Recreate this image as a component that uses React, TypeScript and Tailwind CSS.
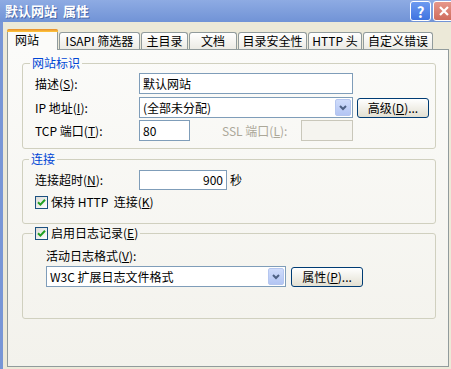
import React from "react";

const tabs = [
  { label: "网站", w: "w-[51px]", active: true },
  { label: "ISAPI 筛选器", w: "w-[81px]" },
  { label: "主目录", w: "w-[47px]" },
  { label: "文档", w: "w-[48px]" },
  { label: "目录安全性", w: "w-[69px]" },
  { label: "HTTP 头", w: "w-[54px]" },
  { label: "自定义错误", w: "w-[70px]" },
];

function Check() {
  return (
    <span className="flex w-[13px] h-[13px] shrink-0 items-center justify-center border border-[#1c5180] bg-gradient-to-br from-[#dcdcd7] to-white">
      <svg width="9" height="9" viewBox="0 0 9 9">
        <path d="M1 4.2 L3.4 6.6 L8 1.8" fill="none" stroke="#21a121" strokeWidth="2" />
      </svg>
    </span>
  );
}

function Combo({ w, text }: { w: string; text: string }) {
  return (
    <div className={`${w} h-[21px] flex items-center border border-[#7f9db9] bg-white`}>
      <span className="flex-1 pl-[3px] leading-[14px] whitespace-nowrap">{text}</span>
      <span className="flex w-[16px] h-[17px] mr-px items-center justify-center rounded-[2px] border border-[#b5c6ef] bg-gradient-to-b from-[#cfdcfb] to-[#b3c5f3]">
        <svg width="8" height="6" viewBox="0 0 8 6">
          <path d="M1 1 L4 4 L7 1" fill="none" stroke="#4d6185" strokeWidth="2" />
        </svg>
      </span>
    </div>
  );
}

function XpButton({ children }: { children: React.ReactNode }) {
  return (
    <div className="w-[72px] h-[20px] flex items-center justify-center rounded-[3px] border border-[#003c74] bg-gradient-to-b from-white to-[#e3e0d2] leading-[14px] whitespace-nowrap">
      {children}
    </div>
  );
}

export default function App() {
  return (
    <div className="w-[451px] h-[369px] overflow-hidden flex flex-col bg-[#ece9d8] text-[12px] text-black font-['Noto_Sans_CJK_SC','Noto_Sans',sans-serif]">
      {/* title bar */}
      <div className="h-[22px] shrink-0 flex items-center justify-between bg-gradient-to-b from-[#8eabe3] to-[#7193d6] pl-[5px]">
        <span className="text-white font-bold text-[13px] leading-[16px] [text-shadow:1px_1px_0_#4a68a8] whitespace-pre">
          默认网站  属性
        </span>
        <div className="flex items-center gap-[2px] self-start mt-px">
          <span className="w-[21px] h-[20px] flex items-center justify-center rounded-[3px] border border-white bg-gradient-to-b from-[#6d9af0] to-[#3f73e0] text-white font-bold text-[15px] leading-none">
            ?
          </span>
          <span className="w-[21px] h-[20px] -mr-[3px] flex items-center justify-center rounded-[3px] border border-white bg-gradient-to-b from-[#e6978b] to-[#cf6c5d]">
            <svg width="12" height="12" viewBox="0 0 12 12">
              <path d="M2 2 L10 10 M10 2 L2 10" stroke="white" strokeWidth="2.2" />
            </svg>
          </span>
        </div>
      </div>

      <div className="flex flex-1">
        <div className="w-[3px] bg-[#7896d6]" />
        <div className="flex-1 flex flex-col pl-[4px]">
          {/* tabs */}
          <div className="h-[27px] flex items-end">
            {tabs.map((t) =>
              t.active ? (
                <div
                  key={t.label}
                  className={`${t.w} h-[21px] -mb-px relative z-10 flex flex-col rounded-t-[3px] border-x border-[#919b9c] bg-[#fbfbf9]`}
                >
                  <div className="h-[3px] rounded-t-[2px] bg-gradient-to-b from-[#e68b2c] to-[#ffc83c] -mx-px" />
                  <span className="pl-[7px] pt-[1px] leading-[14px]">{t.label}</span>
                </div>
              ) : (
                <div
                  key={t.label}
                  className={`${t.w} h-[17px] ml-px flex items-center justify-center rounded-t-[3px] border-x border-t border-[#919b9c] bg-gradient-to-b from-white to-[#ecebe5] leading-[14px] whitespace-pre`}
                >
                  {t.label}
                </div>
              )
            )}
          </div>

          {/* panel */}
          <div className="w-[442px] h-[318px] flex flex-col border border-[#919b9c] bg-gradient-to-b from-[#fbfbf9] to-[#f3f2ec] pl-[14px]">
            {/* 网站标识 */}
            <fieldset className="w-[414px] mt-[6px] border border-[#d0d0bf] rounded-[3px]">
              <legend className="ml-[7px] px-[2px] leading-[14px] text-[#0046d5]">网站标识</legend>
              <div className="flex flex-col pl-[12px] pb-[7px]">
                <div className="flex items-center mt-[3px] h-[21px]">
                  <span className="w-[104px] shrink-0">
                    描述(<u>S</u>):
                  </span>
                  <div className="w-[214px] h-[21px] flex items-center border border-[#7f9db9] bg-white pl-[3px]">默认网站</div>
                </div>
                <div className="flex items-center mt-[3px] h-[21px]">
                  <span className="w-[104px] shrink-0">
                    IP 地址(<u>I</u>):
                  </span>
                  <Combo w="w-[214px]" text="(全部未分配)" />
                  <div className="ml-[4px]">
                    <XpButton>
                      高级(<u>D</u>)...
                    </XpButton>
                  </div>
                </div>
                <div className="flex items-center mt-[2px] h-[21px]">
                  <span className="w-[104px] shrink-0">
                    TCP 端口(<u>T</u>):
                  </span>
                  <div className="w-[51px] h-[21px] flex items-center border border-[#7f9db9] bg-white pl-[3px]">80</div>
                  <span className="ml-[32px] w-[79px] text-[#aca899]">
                    SSL 端口(<u>L</u>):
                  </span>
                  <div className="w-[52px] h-[21px] border border-[#c9c7ba] bg-[#f5f4ef]" />
                </div>
              </div>
            </fieldset>

            {/* 连接 */}
            <fieldset className="w-[414px] mt-[3px] border border-[#d0d0bf] rounded-[3px]">
              <legend className="ml-[6px] px-[2px] leading-[14px] text-[#0046d5]">连接</legend>
              <div className="flex flex-col pl-[12px] pb-[14px]">
                <div className="flex items-center mt-[4px] h-[20px]">
                  <span className="w-[104px] shrink-0">
                    连接超时(<u>N</u>):
                  </span>
                  <div className="w-[88px] h-[20px] flex items-center justify-end border border-[#7f9db9] bg-white pr-[3px]">900</div>
                  <span className="ml-[3px]">秒</span>
                </div>
                <div className="flex items-center mt-[5px] h-[14px] gap-[3px]">
                  <Check />
                  <span className="leading-[14px] whitespace-pre">
                    保持 HTTP  连接(<u>K</u>)
                  </span>
                </div>
              </div>
            </fieldset>

            {/* 日志 */}
            <fieldset className="w-[414px] mt-[2px] border border-[#d0d0bf] rounded-[3px]">
              <legend className="ml-[10px] px-[2px] flex items-center gap-[3px] leading-[14px]">
                <Check />
                <span>
                  启用日志记录(<u>E</u>)
                </span>
              </legend>
              <div className="flex flex-col pl-[23px] pb-[31px]">
                <span className="mt-[9px] leading-[14px]">
                  活动日志格式(<u>V</u>):
                </span>
                <div className="flex items-center mt-[3px] h-[21px]">
                  <Combo w="w-[240px]" text="W3C 扩展日志文件格式" />
                  <div className="ml-[5px]">
                    <XpButton>
                      属性(<u>P</u>)...
                    </XpButton>
                  </div>
                </div>
              </div>
            </fieldset>
          </div>
        </div>
      </div>
    </div>
  );
}
